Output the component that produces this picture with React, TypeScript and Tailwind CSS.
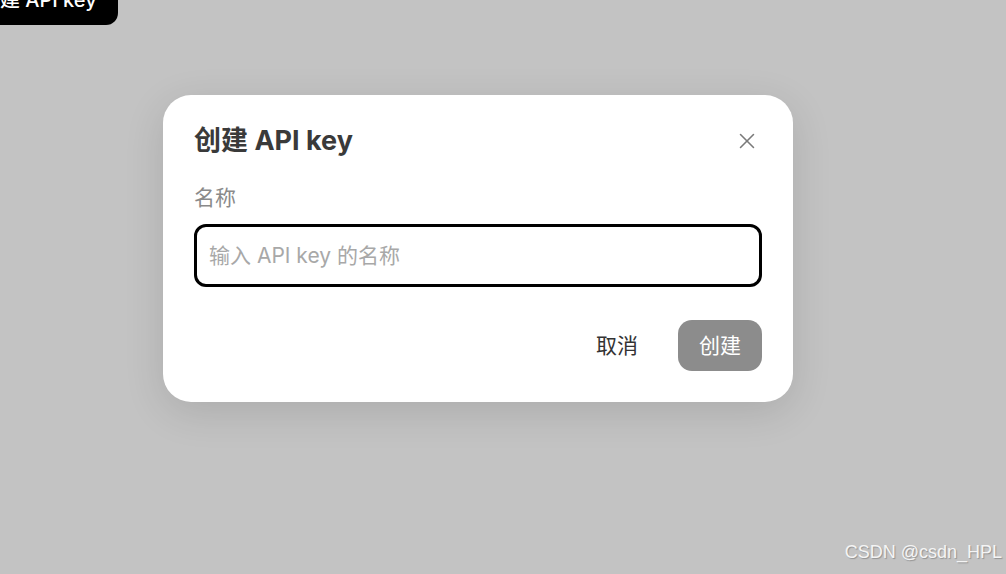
import { X } from "lucide-react"

export default function App() {
  return (
    <div
      className="relative h-[574px] w-[1006px] overflow-hidden bg-[#c3c3c3]"
      style={{ fontFamily: '"Inter", "Noto Sans CJK SC", sans-serif' }}
    >
      {/* page button, mostly scrolled off the top */}
      <button className="-ml-[37px] -mt-[25px] flex h-[50px] items-center rounded-[12px] bg-black pl-[17px] pr-[21px] text-[20px] font-medium text-white">
        创建 API key
      </button>

      {/* modal */}
      <div className="ml-[163px] mt-[70px] w-[630px] rounded-[28px] bg-white px-[31px] pb-[31px] pt-[24px] shadow-[0_10px_40px_rgba(0,0,0,0.12)]">
        <div className="flex items-center justify-between">
          <h2 className="text-[27px] font-bold leading-[44px] text-[#3a3a3a]">创建 API key</h2>
          <button className="mr-[2px] text-[#7a7a7a]">
            <X className="h-[26px] w-[26px]" strokeWidth={1.4} />
          </button>
        </div>

        <label className="mt-[20px] block text-[21px] leading-[30px] text-[#8a8a8a]">名称</label>
        <input
          placeholder="输入 API key 的名称"
          className="mt-[11px] h-[63px] w-full rounded-[12px] border-[3px] border-black px-[12px] text-[21px] text-[#333] outline-none placeholder:text-[#a8a8a8]"
        />

        <div className="mt-[33px] flex items-center justify-end gap-[20px]">
          <button className="px-[20px] text-[21px] leading-[51px] text-[#333]">取消</button>
          <button className="h-[51px] w-[84px] rounded-[14px] bg-[#8c8c8c] text-[21px] text-white">创建</button>
        </div>
      </div>

      {/* watermark */}
      <div
        className="absolute bottom-[8px] right-[4px] text-[18px] text-[#f4f4f4] [text-shadow:1px_1px_1px_rgba(0,0,0,0.25)]"
        style={{ fontFamily: '"Liberation Sans", sans-serif' }}
      >
        CSDN @csdn_HPL
      </div>
    </div>
  )
}
